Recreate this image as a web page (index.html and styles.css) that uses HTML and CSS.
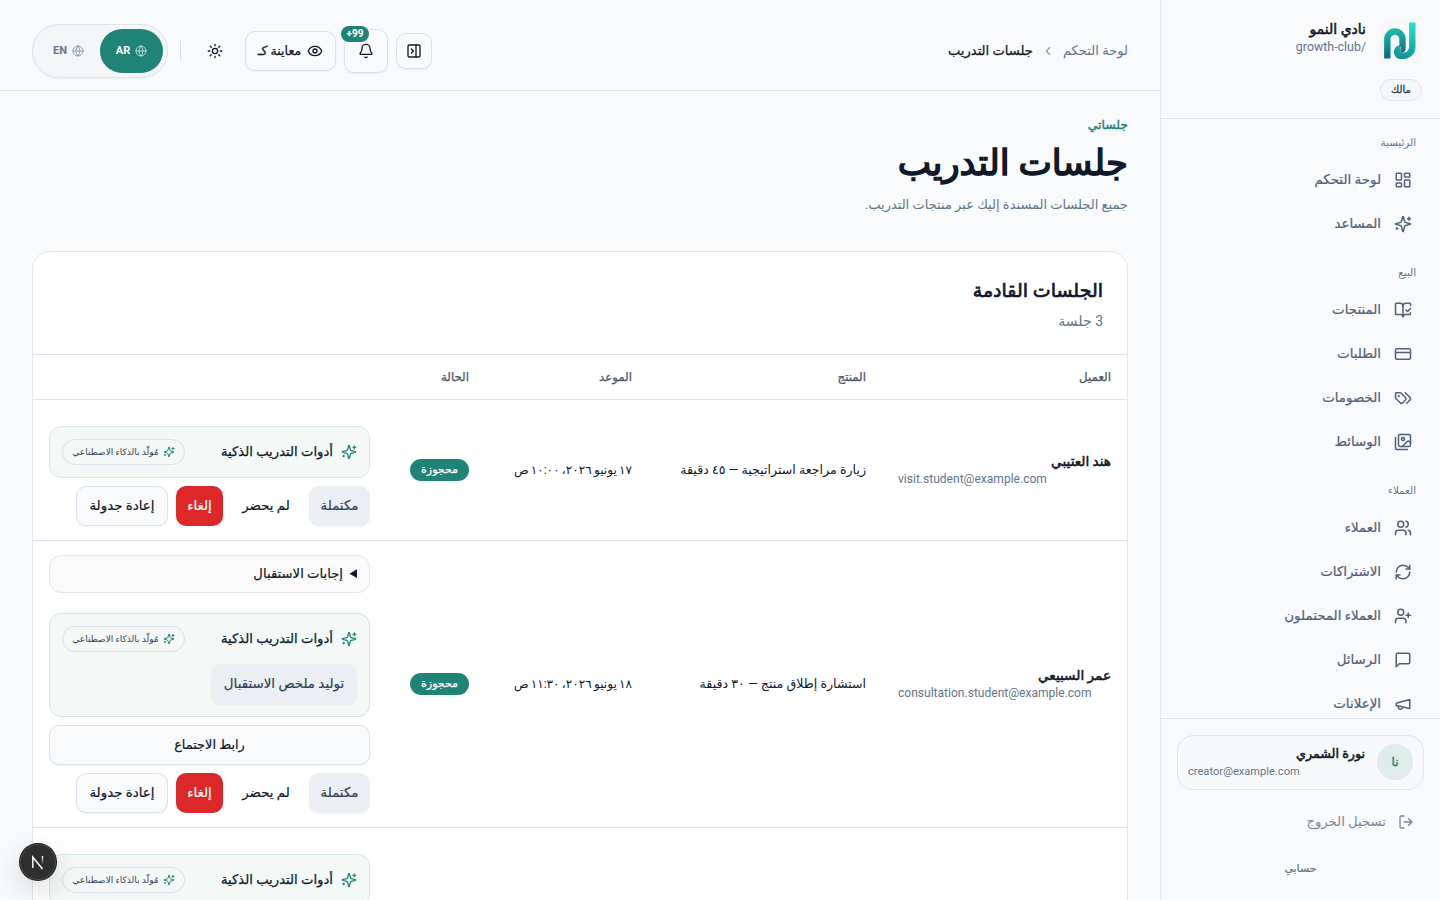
FILE: index.html
```
<!DOCTYPE html>
<html lang="ar" dir="rtl">
<head>
    <meta charset="UTF-8" />
    <title>جلسات التدريب</title>
    <link rel="stylesheet" href="styles.css">
</head>
<body>
<svg class="sprite" width="0" height="0">
    <symbol id="i-dashboard" viewBox="0 0 24 24"><rect width="7" height="9" x="3" y="3" rx="1"/><rect width="7" height="5" x="14" y="3" rx="1"/><rect width="7" height="9" x="14" y="12" rx="1"/><rect width="7" height="5" x="3" y="16" rx="1"/></symbol>
    <symbol id="i-sparkles" viewBox="0 0 24 24"><path d="M9.937 15.5A2 2 0 0 0 8.5 14.063l-6.135-1.582a.5.5 0 0 1 0-.962L8.5 9.936A2 2 0 0 0 9.937 8.5l1.582-6.135a.5.5 0 0 1 .963 0L14.063 8.5A2 2 0 0 0 15.5 9.937l6.135 1.581a.5.5 0 0 1 0 .964L15.5 14.063a2 2 0 0 0-1.437 1.437l-1.582 6.135a.5.5 0 0 1-.963 0z"/><path d="M20 3v4M22 5h-4M4 17v2M5 18H3"/></symbol>
    <symbol id="i-book" viewBox="0 0 24 24"><path d="M12 21V7"/><path d="m16 12 2 2 4-4"/><path d="M22 6V4a1 1 0 0 0-1-1h-5a4 4 0 0 0-4 4 4 4 0 0 0-4-4H3a1 1 0 0 0-1 1v13a1 1 0 0 0 1 1h6a3 3 0 0 1 3 3 3 3 0 0 1 3-3h6a1 1 0 0 0 1-1v-1.3"/></symbol>
    <symbol id="i-card" viewBox="0 0 24 24"><rect width="20" height="14" x="2" y="5" rx="2"/><path d="M2 10h20"/></symbol>
    <symbol id="i-tags" viewBox="0 0 24 24"><path d="m15 5 6.3 6.3a2.4 2.4 0 0 1 0 3.4L17 19"/><path d="M9.586 5.586A2 2 0 0 0 8.172 5H3a1 1 0 0 0-1 1v5.172a2 2 0 0 0 .586 1.414L8.29 18.29a2.426 2.426 0 0 0 3.42 0l3.58-3.58a2.426 2.426 0 0 0 0-3.42z"/><circle cx="6.5" cy="9.5" r=".5" fill="currentColor"/></symbol>
    <symbol id="i-images" viewBox="0 0 24 24"><path d="M18 22H4a2 2 0 0 1-2-2V6"/><path d="m22 13-1.296-1.296a2.41 2.41 0 0 0-3.408 0L11 18"/><circle cx="12" cy="8" r="2"/><rect width="16" height="16" x="6" y="2" rx="2"/></symbol>
    <symbol id="i-users" viewBox="0 0 24 24"><path d="M16 21v-2a4 4 0 0 0-4-4H6a4 4 0 0 0-4 4v2"/><circle cx="9" cy="7" r="4"/><path d="M22 21v-2a4 4 0 0 0-3-3.87M16 3.13a4 4 0 0 1 0 7.75"/></symbol>
    <symbol id="i-refresh" viewBox="0 0 24 24"><path d="M3 12a9 9 0 0 1 9-9 9.75 9.75 0 0 1 6.74 2.74L21 8"/><path d="M21 3v5h-5"/><path d="M21 12a9 9 0 0 1-9 9 9.75 9.75 0 0 1-6.74-2.74L3 16"/><path d="M8 16H3v5"/></symbol>
    <symbol id="i-user-plus" viewBox="0 0 24 24"><path d="M16 21v-2a4 4 0 0 0-4-4H6a4 4 0 0 0-4 4v2"/><circle cx="9" cy="7" r="4"/><path d="M19 8v6M22 11h-6"/></symbol>
    <symbol id="i-message" viewBox="0 0 24 24"><path d="M21 15a2 2 0 0 1-2 2H7l-4 4V5a2 2 0 0 1 2-2h14a2 2 0 0 1 2 2z"/></symbol>
    <symbol id="i-megaphone" viewBox="0 0 24 24"><path d="m3 11 18-5v12L3 14v-3z"/><path d="M11.6 16.8a3 3 0 1 1-5.8-1.6"/></symbol>
    <symbol id="i-logout" viewBox="0 0 24 24"><path d="M9 21H5a2 2 0 0 1-2-2V5a2 2 0 0 1 2-2h4"/><path d="m16 17 5-5-5-5M21 12H9"/></symbol>
    <symbol id="i-panel" viewBox="0 0 24 24"><rect width="18" height="18" x="3" y="3" rx="2"/><path d="M15 3v18M8 9l3 3-3 3"/></symbol>
    <symbol id="i-bell" viewBox="0 0 24 24"><path d="M10.268 21a2 2 0 0 0 3.464 0"/><path d="M3.262 15.326A1 1 0 0 0 4 17h16a1 1 0 0 0 .74-1.673C19.41 13.956 18 12.499 18 8A6 6 0 0 0 6 8c0 4.499-1.411 5.956-2.738 7.326"/></symbol>
    <symbol id="i-eye" viewBox="0 0 24 24"><path d="M2.062 12.348a1 1 0 0 1 0-.696 10.75 10.75 0 0 1 19.876 0 1 1 0 0 1 0 .696 10.75 10.75 0 0 1-19.876 0"/><circle cx="12" cy="12" r="3"/></symbol>
    <symbol id="i-sun" viewBox="0 0 24 24"><circle cx="12" cy="12" r="4"/><path d="M12 2v2M12 20v2M4.93 4.93l1.41 1.41M17.66 17.66l1.41 1.41M2 12h2M20 12h2M6.34 17.66l-1.41 1.41M19.07 4.93l-1.41 1.41"/></symbol>
    <symbol id="i-globe" viewBox="0 0 24 24"><circle cx="12" cy="12" r="10"/><path d="M12 2a14.5 14.5 0 0 0 0 20 14.5 14.5 0 0 0 0-20M2 12h20"/></symbol>
    <symbol id="i-chevron" viewBox="0 0 24 24"><path d="m15 18-6-6 6-6"/></symbol>
</svg>

<div class="app">
    <aside class="sidebar">
        <div class="brand">
            <div class="brand-row">
                <svg class="logo" viewBox="0 0 44 44">
                    <defs>
                        <linearGradient id="lg-n" gradientUnits="userSpaceOnUse" x1="10" y1="8" x2="14" y2="39"><stop offset="0" stop-color="#1cc0b2"/><stop offset="1" stop-color="#0b6675"/></linearGradient>
                        <linearGradient id="lg-j" gradientUnits="userSpaceOnUse" x1="34" y1="2" x2="22" y2="39"><stop offset="0" stop-color="#2ee0ce"/><stop offset="1" stop-color="#0f9195"/></linearGradient>
                    </defs>
                    <rect width="44" height="44" rx="10" fill="#f8f8f8"/>
                    <path d="M34.300 2.500V27a9 8.800 0 0 1-9 8.800H22a3.500 3.800 0 0 1 0-7.500" stroke="url(#lg-j)"/>
                    <path d="M9.300 38.500V19a7.600 7.500 0 0 1 15.200 0V28.500q0 1-2 1" stroke="url(#lg-n)"/>
                </svg>
                <div class="brand-text">
                    <strong class="brand-name">نادي النمو</strong>
                    <span class="brand-slug">/growth-club</span>
                </div>
            </div>
            <span class="role">مالك</span>
        </div>
        <nav class="nav">
            <h3>الرئيسية</h3>
            <a><svg class="icon"><use href="#i-dashboard"/></svg><span>لوحة التحكم</span></a>
            <a><svg class="icon"><use href="#i-sparkles"/></svg><span>المساعد</span></a>
            <h3>البيع</h3>
            <a><svg class="icon"><use href="#i-book"/></svg><span>المنتجات</span></a>
            <a><svg class="icon"><use href="#i-card"/></svg><span>الطلبات</span></a>
            <a><svg class="icon"><use href="#i-tags"/></svg><span>الخصومات</span></a>
            <a><svg class="icon"><use href="#i-images"/></svg><span>الوسائط</span></a>
            <h3>العملاء</h3>
            <a><svg class="icon"><use href="#i-users"/></svg><span>العملاء</span></a>
            <a><svg class="icon"><use href="#i-refresh"/></svg><span>الاشتراكات</span></a>
            <a><svg class="icon"><use href="#i-user-plus"/></svg><span>العملاء المحتملون</span></a>
            <a><svg class="icon"><use href="#i-message"/></svg><span>الرسائل</span></a>
            <a><svg class="icon"><use href="#i-megaphone"/></svg><span>الإعلانات</span></a>
        </nav>
        <div class="sidebar-footer">
            <div class="user">
                <span class="avatar">نا</span>
                <div class="user-text">
                    <strong>نورة الشمري</strong>
                    <span class="user-email" dir="ltr">creator@example.com</span>
                </div>
            </div>
            <a class="logout"><svg class="icon"><use href="#i-logout"/></svg><span>تسجيل الخروج</span></a>
            <a class="account">حسابي</a>
        </div>
    </aside>

    <main class="main">
        <header class="topbar">
            <div class="crumbs">
                <span>لوحة التحكم</span>
                <svg class="icon"><use href="#i-chevron"/></svg>
                <b>جلسات التدريب</b>
            </div>
            <div class="tools">
                <button class="tool tool-panel"><svg class="icon"><use href="#i-panel"/></svg></button>
                <button class="tool tool-bell"><svg class="icon"><use href="#i-bell"/></svg><span class="count" dir="ltr">+99</span></button>
                <button class="tool tool-preview"><svg class="icon"><use href="#i-eye"/></svg><span>معاينة كـ</span></button>
                <button class="tool tool-theme"><svg class="icon"><use href="#i-sun"/></svg></button>
                <span class="divider"></span>
                <div class="lang">
                    <span class="lang-item active"><svg class="icon"><use href="#i-globe"/></svg>AR</span>
                    <span class="lang-item"><svg class="icon"><use href="#i-globe"/></svg>EN</span>
                </div>
            </div>
        </header>

        <div class="content">
            <p class="eyebrow">جلساتي</p>
            <h1>جلسات التدريب</h1>
            <p class="lead">جميع الجلسات المسندة إليك عبر منتجات التدريب.</p>

            <section class="card">
                <div class="card-head">
                    <h2>الجلسات القادمة</h2>
                    <p>3 جلسة</p>
                </div>
                <table>
                    <colgroup><col class="c-client"><col class="c-product"><col class="c-date"><col class="c-status"><col></colgroup>
                    <thead>
                    <tr><th>العميل</th><th>المنتج</th><th>الموعد</th><th>الحالة</th><th></th></tr>
                    </thead>
                    <tbody>
                    <tr>
                        <td><strong class="client">هند العتيبي</strong><span class="email" dir="ltr">visit.student@example.com</span></td>
                        <td><span class="product">زيارة مراجعة استراتيجية — ٤٥ دقيقة</span></td>
                        <td><span class="date">١٧ يونيو ٢٠٢٦، ١٠:٠٠ ص</span></td>
                        <td><span class="badge">محجوزة</span></td>
                        <td>
                            <div class="actions">
                                <div class="ai">
                                    <div class="ai-head"><svg class="icon"><use href="#i-sparkles"/></svg><b>أدوات التدريب الذكية</b><span class="ai-tag"><svg class="icon"><use href="#i-sparkles"/></svg><span>مُولّد بالذكاء الاصطناعي</span></span></div>
                                </div>
                                <div class="buttons">
                                    <button class="btn secondary w-done">مكتملة</button>
                                    <button class="btn ghost w-absent">لم يحضر</button>
                                    <button class="btn danger w-cancel">إلغاء</button>
                                    <button class="btn outline w-move">إعادة جدولة</button>
                                </div>
                            </div>
                        </td>
                    </tr>
                    <tr>
                        <td><strong class="client">عمر السبيعي</strong><span class="email" dir="ltr">consultation.student@example.com</span></td>
                        <td><span class="product">استشارة إطلاق منتج — ٣٠ دقيقة</span></td>
                        <td><span class="date">١٨ يونيو ٢٠٢٦، ١١:٣٠ ص</span></td>
                        <td><span class="badge">محجوزة</span></td>
                        <td>
                            <div class="actions">
                                <details class="intake"><summary>إجابات الاستقبال</summary></details>
                                <div class="ai">
                                    <div class="ai-head"><svg class="icon"><use href="#i-sparkles"/></svg><b>أدوات التدريب الذكية</b><span class="ai-tag"><svg class="icon"><use href="#i-sparkles"/></svg><span>مُولّد بالذكاء الاصطناعي</span></span></div>
                                    <button class="btn secondary w-summary">توليد ملخص الاستقبال</button>
                                </div>
                                <button class="btn outline wide">رابط الاجتماع</button>
                                <div class="buttons">
                                    <button class="btn secondary w-done">مكتملة</button>
                                    <button class="btn ghost w-absent">لم يحضر</button>
                                    <button class="btn danger w-cancel">إلغاء</button>
                                    <button class="btn outline w-move">إعادة جدولة</button>
                                </div>
                            </div>
                        </td>
                    </tr>
                    <tr>
                        <td></td>
                        <td></td>
                        <td></td>
                        <td></td>
                        <td>
                            <div class="actions">
                                <div class="ai">
                                    <div class="ai-head"><svg class="icon"><use href="#i-sparkles"/></svg><b>أدوات التدريب الذكية</b><span class="ai-tag"><svg class="icon"><use href="#i-sparkles"/></svg><span>مُولّد بالذكاء الاصطناعي</span></span></div>
                                </div>
                            </div>
                        </td>
                    </tr>
                    </tbody>
                </table>
            </section>
        </div>
    </main>
</div>

<div class="dev-badge">
    <svg viewBox="0 0 20 20">
        <defs><linearGradient id="lg-fade" gradientUnits="userSpaceOnUse" x1="0" y1="4" x2="0" y2="13"><stop offset="0" stop-color="#fff"/><stop offset="1" stop-color="#fff" stop-opacity="0"/></linearGradient></defs>
        <path d="M4.800 16V5L14.500 17" stroke="#fff"/>
        <path d="M14.500 4v9" stroke="url(#lg-fade)"/>
    </svg>
</div>
</body>
</html>
```
FILE: styles.css
```
* {
    box-sizing: border-box;
}
body {
    margin: 0;
    height: 900px;
    overflow: hidden;
    background: #f8fafc;
    color: #111827;
    font-family: Roboto, "DejaVu Sans", sans-serif;
    font-size: 14px;
    line-height: 20px;
}
h1, h2, h3, p {
    margin: 0;
}
h1, h2, strong, b, .eyebrow {
    font-weight: normal;
    -webkit-text-stroke: .55px currentColor;
}
button {
    font: inherit;
    color: inherit;
    white-space: nowrap;
}
.sprite {
    position: absolute;
}
.icon {
    width: 16px;
    height: 16px;
    flex: none;
    fill: none;
    stroke: currentColor;
    stroke-width: 2;
    stroke-linecap: round;
    stroke-linejoin: round;
}
.app {
    display: flex;
    height: 900px;
    overflow: hidden;
}

/* sidebar */
.sidebar {
    width: 280px;
    flex: none;
    display: flex;
    flex-direction: column;
    border-left: 1px solid #e2e6ee;
    white-space: nowrap;
}
.brand {
    height: 119px;
    flex: none;
    padding: 20px 18px 0;
    border-bottom: 1px solid #e2e6ee;
}
.brand-row {
    display: flex;
    gap: 12px;
}
.logo {
    width: 44px;
    height: 44px;
    fill: none;
    stroke-width: 6.4;
}
.brand-text {
    display: flex;
    flex-direction: column;
}
.brand-name {
    font-size: 14px;
    line-height: 19px;
}
.brand-slug {
    font-size: 12.4px;
    line-height: 15px;
    color: #64748b;
}
.role {
    display: flex;
    align-items: center;
    justify-content: center;
    width: 42px;
    height: 22px;
    margin-top: 15px;
    border: 1px solid #e2e6ee;
    border-radius: 11px;
    background: #f4f6f8;
    font-size: 10px;
    color: #334155;
    -webkit-text-stroke: .3px currentColor;
}
.nav {
    flex: 1;
    min-height: 0;
    overflow: hidden;
    padding: 8px 24px 0;
}
.nav h3 {
    padding-top: 6px;
    height: 30px;
    font-size: 10.3px;
    font-weight: normal;
    color: #64748b;
}
.nav a + h3 {
    margin-top: 12px;
}
.nav a {
    display: flex;
    align-items: center;
    gap: 13px;
    height: 44px;
    padding: 1px 4px 0;
    font-size: 13.4px;
    color: #526077;
    -webkit-text-stroke: .2px currentColor;
}
.nav .icon {
    width: 18px;
    height: 18px;
}
.sidebar-footer {
    height: 182px;
    flex: none;
    padding: 16px;
    border-top: 1px solid #e2e6ee;
}
.user {
    display: flex;
    align-items: center;
    gap: 12px;
    height: 55px;
    padding: 0 10px 1px;
    border: 1px solid #e4e7ea;
    border-radius: 16px;
    background: #f7f9fa;
}
.avatar {
    display: flex;
    align-items: center;
    justify-content: center;
    width: 36px;
    height: 36px;
    border-radius: 50%;
    background: #dfecea;
    color: #208377;
    font-size: 12px;
    -webkit-text-stroke: .4px currentColor;
}
.user-text {
    flex: 1;
    display: flex;
    flex-direction: column;
}
.user-text strong {
    font-size: 12.7px;
    line-height: 18px;
}
.user-email {
    font-size: 11.1px;
    line-height: 17px;
    color: #64748b;
}
.logout {
    display: flex;
    align-items: center;
    gap: 12px;
    height: 40px;
    margin-top: 12px;
    padding: 0 10px;
    font-size: 13.2px;
    color: #7b8697;
}
.account {
    display: block;
    margin-top: 17px;
    text-align: center;
    font-size: 11px;
    color: #64748b;
    -webkit-text-stroke: .2px currentColor;
}

/* top bar */
.main {
    flex: 1;
    min-width: 0;
    overflow: hidden;
}
.topbar {
    display: flex;
    align-items: center;
    justify-content: space-between;
    height: 91px;
    padding: 12px 32px 0;
    border-bottom: 1px solid #d9e1ea;
    white-space: nowrap;
}
.crumbs {
    display: flex;
    align-items: center;
    gap: 8px;
    font-size: 13.1px;
    color: #64748b;
}
.crumbs .icon {
    width: 14px;
    height: 14px;
    opacity: .7;
}
.crumbs b {
    color: #111827;
    -webkit-text-stroke-width: .25px;
}
.tools {
    display: flex;
    align-items: center;
}
.tool {
    position: relative;
    display: flex;
    align-items: center;
    justify-content: center;
    gap: 6px;
    padding: 0;
    border: 1px solid #d9e1ea;
    border-radius: 10px;
    background: #f8fafc;
    box-shadow: 0 1px 2px rgba(15, 23, 42, .06);
}
.tool-panel {
    width: 36px;
    height: 36px;
}
.tool-bell {
    width: 44px;
    height: 44px;
    margin-right: 8px;
}
.count {
    position: absolute;
    top: -4px;
    left: -4px;
    width: 28px;
    height: 16px;
    border-radius: 8px;
    background: #208377;
    color: #fff;
    font-size: 10px;
    font-weight: bold;
    line-height: 16px;
}
.tool-preview {
    width: 91px;
    height: 40px;
    margin-right: 8px;
    font-size: 12.6px;
}
.tool-preview span {
    -webkit-text-stroke: .25px currentColor;
}
.tool-theme {
    width: 40px;
    height: 40px;
    margin-right: 10px;
    border-color: transparent;
    background: none;
    box-shadow: none;
}
.divider {
    width: 1px;
    height: 20px;
    margin: 0 14px 0 12px;
    background: #d9e1ea;
}
.lang {
    display: flex;
    width: 136px;
    height: 54px;
    padding: 4px;
    border: 1px solid #dfe3e8;
    border-radius: 27px;
    background: #f4f6f8;
    box-shadow: 0 1px 2px rgba(15, 23, 42, .05);
}
.lang-item {
    flex: 1;
    display: flex;
    align-items: center;
    justify-content: center;
    gap: 5px;
    border-radius: 22px;
    color: #64748b;
    font-size: 11px;
    font-weight: bold;
}
.lang-item .icon {
    width: 12px;
    height: 12px;
    opacity: .7;
}
.lang-item.active {
    background: #208377;
    color: #fff;
}

/* page */
.content {
    padding: 24px 32px 0;
}
.eyebrow {
    color: #208377;
    font-size: 12.4px;
    -webkit-text-stroke-width: .4px;
}
h1 {
    margin-top: 5px;
    font-size: 35.5px;
    line-height: 46px;
    -webkit-text-stroke-width: 1.5px;
}
.lead {
    margin-top: 9px;
    font-size: 13px;
    color: #64748b;
}
.card {
    margin-top: 36px;
    height: 700px;
    border: 1px solid #e0e6ec;
    border-radius: 18px;
    background: #fff;
    overflow: hidden;
}
.card-head {
    height: 102px;
    padding: 25px 24px 0;
}
.card-head h2 {
    font-size: 19px;
    line-height: 28px;
    -webkit-text-stroke-width: .7px;
}
.card-head p {
    margin-top: 6px;
    color: #64748b;
}
table {
    width: 100%;
    table-layout: fixed;
    border-collapse: separate;
    border-spacing: 0;
    border-top: 1px solid #d9e1ea;
    white-space: nowrap;
}
.c-client { width: 245px; }
.c-product { width: 234px; }
.c-date { width: 163px; }
.c-status { width: 99px; }
th {
    height: 45px;
    padding: 0 16px;
    border-bottom: 1px solid #d9e1ea;
    text-align: right;
    font-size: 11.8px;
    font-weight: normal;
    color: #4b5565;
    -webkit-text-stroke: .25px currentColor;
}
td {
    padding: 14px 16px;
    border-bottom: 1px solid #d9e1ea;
    vertical-align: middle;
}
.client {
    display: block;
    font-size: 13.6px;
    line-height: 18px;
}
.email {
    display: block;
    font-size: 12.05px;
    line-height: 19px;
    color: #64748b;
}
.product {
    display: block;
    font-size: 12.6px;
}
.date {
    display: block;
    font-size: 12.1px;
    word-spacing: -.8px;
}
.badge {
    display: flex;
    align-items: center;
    justify-content: center;
    width: 59px;
    height: 22px;
    border-radius: 11px;
    background: #208377;
    color: #fff;
    font-size: 11px;
    -webkit-text-stroke: .25px currentColor;
}
.actions {
    display: flex;
    flex-direction: column;
    gap: 8px;
}
.ai {
    margin-top: 12px;
    padding: 12px;
    border: 1px solid #d3e6e2;
    border-radius: 12px;
    background: #f4f8f7;
}
.ai-head {
    display: flex;
    align-items: center;
    height: 26px;
    gap: 8px;
}
.ai-head b {
    margin-top: -1px;
    font-size: 13.2px;
    -webkit-text-stroke-width: .25px;
}
.ai-head .icon {
    color: #208377;
}
.ai-tag {
    display: flex;
    align-items: center;
    justify-content: center;
    gap: 4px;
    width: 123px;
    height: 26px;
    margin-right: auto;
    border: 1px solid #d9e1ea;
    border-radius: 13px;
    font-size: 9px;
    color: #334155;
}
.ai-tag .icon {
    width: 12px;
    height: 12px;
}
.buttons {
    display: flex;
    gap: 8px;
}
.btn {
    height: 40px;
    padding: 0 0 1px;
    border: 1px solid transparent;
    border-radius: 10px;
    background: none;
    font-size: 13.4px;
    -webkit-text-stroke: .2px currentColor;
}
.btn.secondary {
    background: #ebeff3;
    color: #334155;
    box-shadow: 0 1px 2px rgba(15, 23, 42, .05);
}
.btn.danger {
    background: #dc2828;
    color: #fff;
}
.btn.outline {
    border-color: #d9e1ea;
    background: #f8fafc;
    box-shadow: 0 1px 2px rgba(15, 23, 42, .06);
}
.w-done { width: 61px; }
.w-absent { width: 70px; }
.w-cancel { width: 47px; }
.w-move { width: 92px; }
.btn.wide {
    width: 100%;
    font-size: 12.9px;
}
.w-summary {
    display: block;
    width: 146px;
    margin-top: 12px;
}
.intake {
    height: 38px;
    padding: 8px 12px;
    border: 1px solid #e2e6ee;
    border-radius: 12px;
    background: #fafafa;
    font-size: 13.2px;
    -webkit-text-stroke: .2px currentColor;
}

/* floating dev indicator */
.dev-badge {
    position: absolute;
    left: 20px;
    top: 844px;
    width: 36px;
    height: 36px;
    border-radius: 50%;
    background: #2e2e2e;
    box-shadow: 0 0 0 1px #171717, inset 0 0 0 1px #4a4a4a, 0 10px 28px rgba(0, 0, 0, .16);
}
.dev-badge svg {
    display: block;
    width: 20px;
    height: 20px;
    margin: 8px;
    fill: none;
    stroke-width: 1.5;
}
```
